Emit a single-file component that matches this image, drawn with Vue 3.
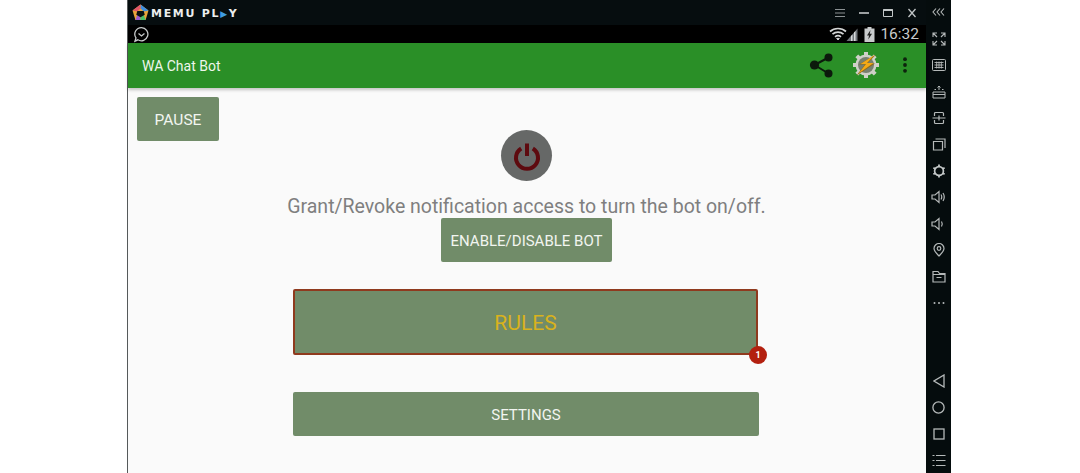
<script setup>
</script>

<template>
  <div class="page">
    <div class="emulator">
      <div class="main">
        <div class="titlebar">
          <svg class="logo" width="17" height="17" viewBox="0 0 16 16">
            <path d="M8 .5 15.500 6 12.800 15H3.200L.5 6Z" fill="#e8a33a" />
            <path d="M8 .5 15.500 6 11 7 8 4Z" fill="#3d8fe0" />
            <path d="M.5 6 8 .5V4L5 7Z" fill="#e0566a" />
            <path d="M3.200 15 5 10 8 12V15Z" fill="#9a5bd0" />
            <path d="M8 12 11 10 12.800 15H8Z" fill="#4cc06a" />
            <path d="M5 6.500H11L12 10 8 12.500 4 10Z" fill="#0a1012" />
          </svg>
          <span class="brand">MEMU PL<span class="brand-a">▶</span>Y</span>
          <div class="window-controls">
            <svg width="12" height="10" viewBox="0 0 12 10" stroke="#8b9193" fill="none">
              <path d="M1 1.500H11M1 5H11M1 8.500H11" />
            </svg>
            <svg width="12" height="10" viewBox="0 0 12 10" stroke="#c2c6c7" stroke-width="1.600" fill="none">
              <path d="M1 5H11" />
            </svg>
            <svg width="12" height="10" viewBox="0 0 12 10" stroke="#c2c6c7" fill="none">
              <path d="M1.500 1.500H10.500V8.500H1.500Z" />
              <path d="M1.500 2H10.500" stroke-width="2" />
            </svg>
            <svg width="12" height="10" viewBox="0 0 12 10" stroke="#c2c6c7" stroke-width="1.300" fill="none">
              <path d="M2.500 1 9.500 9M9.500 1 2.500 9" />
            </svg>
          </div>
        </div>

        <div class="statusbar">
          <svg class="notif" width="17" height="17" viewBox="0 0 16 16" fill="none" stroke="#c8cccc" stroke-width="1.200">
            <path d="M8 1.500A6.200 6.200 0 1 1 4.600 13L1.800 14.300 2.800 11.200A6.200 6.200 0 0 1 8 1.500Z" />
            <path d="M5.200 7 8 9.400 10.800 7" />
          </svg>
          <div class="status-right">
            <svg width="18" height="14" viewBox="0 0 18 14" fill="none" stroke="#d4d6d6" stroke-width="1.700">
              <path d="M1 4.500C5.500 .5 12.500 .5 17 4.500" />
              <path d="M3.500 7.200C6.500 4.500 11.500 4.500 14.500 7.200" />
              <path d="M6 9.800C7.800 8.400 10.200 8.400 12 9.800" />
              <path d="M7.700 11.400 9 13 10.300 11.400Z" fill="#d4d6d6" stroke-width="1" />
            </svg>
            <svg class="signal" width="12" height="13" viewBox="0 0 12 13">
              <path d="M11.500 .5V13H.5Z" fill="#70757a" />
              <path d="M8 4.500V13H9.500V3ZM5 8V13H6.500V6.500Z" fill="#d8dadb" />
            </svg>
            <svg class="battery" width="11" height="15" viewBox="0 0 10 15">
              <path d="M3 0H7V1.500H10V15H0V1.500H3Z" fill="#c9cbcc" />
              <path d="M6 3 2.500 8.500H4.500L3.800 12.500 7.500 6.800H5.300Z" fill="#222" />
            </svg>
            <span class="clock">16:32</span>
          </div>
        </div>

        <header class="appbar">
          <span class="app-title">WA Chat Bot</span>
          <div class="app-actions">
            <svg width="26" height="26" viewBox="0 0 26 26" fill="#0c1a0c">
              <circle cx="19.500" cy="5.500" r="4" />
              <circle cx="5.500" cy="13" r="4.600" />
              <circle cx="19.500" cy="21.500" r="4" />
              <path d="M5.500 13 19.500 5.500M5.500 13 19.500 21.500" stroke="#0c1a0c" stroke-width="2" />
            </svg>
            <svg class="tasker" width="28" height="28" viewBox="0 0 28 28">
              <circle cx="14" cy="14" r="10.500" fill="#cfd0c8" />
              <g stroke="#cfd0c8" stroke-width="4">
                <path d="M14 1V27M1 14H27M4.800 4.800 23.200 23.200M23.200 4.800 4.800 23.200" />
              </g>
              <circle cx="14" cy="14" r="8" fill="#77806f" />
              <path d="M24 3.500 7 13.500H13L4.500 24.500 23 12.500H15.500Z" fill="#8d6a1a" />
              <path d="M22.500 4 8.500 13H14L6.500 22.500 21.500 12H15Z" fill="#f3a916" />
            </svg>
            <svg width="4" height="16" viewBox="0 0 4 16" fill="#0d220d">
              <circle cx="2" cy="2.200" r="1.900" />
              <circle cx="2" cy="8" r="1.900" />
              <circle cx="2" cy="13.800" r="1.900" />
            </svg>
          </div>
        </header>

        <main class="content">
          <button class="btn pause">PAUSE</button>
          <div class="center">
            <div class="power">
              <svg width="30" height="30" viewBox="0 0 30 30" fill="none" stroke="#5e0a0f" stroke-width="4">
                <path d="M9.200 7.500A11 11 0 1 0 20.800 7.500" />
                <path d="M15 2.500V15" />
              </svg>
            </div>
            <p class="hint">Grant/Revoke notification access to turn the bot on/off.</p>
            <button class="btn enable">ENABLE/DISABLE BOT</button>
            <div class="rules-wrap">
              <button class="btn rules">RULES</button>
              <span class="badge">1</span>
            </div>
            <button class="btn settings">SETTINGS</button>
          </div>
        </main>
      </div>

      <aside class="sidebar">
        <div class="side-group side-top">
          <svg width="14" height="10" viewBox="0 0 14 10" fill="none" stroke="#b5b9b9" stroke-width="1.100">
            <path d="M4 1.500 1 5 4 8.500M8 1.500 5 5 8 8.500M12 1.500 9 5 12 8.500" />
          </svg>
          <svg width="14" height="14" viewBox="0 0 14 14" fill="none" stroke="#b5b9b9" stroke-width="1.100">
            <path d="M5 1H1V5M1 1 5 5M9 1H13V5M13 1 9 5M1 9V13H5M1 13 5 9M13 9V13H9M13 13 9 9" />
          </svg>
          <svg width="14" height="12" viewBox="0 0 14 12" fill="none" stroke="#b5b9b9">
            <rect x=".5" y=".5" width="13" height="11" rx="1" />
            <path d="M2.500 3.500H11.500M2.500 6H11.500M2.500 8.500H11.500M4.700 2.500V9.500M7 2.500V9.500M9.300 2.500V9.500" stroke-width=".9" />
          </svg>
          <svg width="14" height="14" viewBox="0 0 14 14" fill="none" stroke="#b5b9b9">
            <path d="M1 7H13V13H1ZM1 9.500H13M7 1V5M5.500 2.500 7 1 8.500 2.500M2.500 4.500H4M10 4.500H11.500" />
          </svg>
          <svg width="14" height="14" viewBox="0 0 14 14" fill="none" stroke="#b5b9b9" stroke-width="1.200">
            <path d="M2.500 5V2.500A1 1 0 0 1 3.500 1.500H10.500A1 1 0 0 1 11.500 2.500V5M2.500 9V11.500A1 1 0 0 0 3.500 12.500H10.500A1 1 0 0 0 11.500 11.500V9M.5 7H13.500M7 4.500V9.500" />
          </svg>
          <svg width="14" height="13" viewBox="0 0 14 13" fill="none" stroke="#b5b9b9" stroke-width="1.200">
            <path d="M1.500 3.500H10.500V12H1.500ZM3.500 1H13V10" />
          </svg>
          <svg width="14" height="14" viewBox="0 0 14 14" fill="none" stroke="#c4c8c8">
            <circle cx="7" cy="7" r="4.400" stroke-width="1.700" />
            <path d="M7 .5V2.500M7 11.500V13.500M1.400 3.800 3.100 4.800M10.900 9.200 12.600 10.200M1.400 10.200 3.100 9.200M10.900 4.800 12.600 3.800" stroke-width="1.800" />
          </svg>
          <svg width="15" height="14" viewBox="0 0 15 14" fill="none" stroke="#b5b9b9" stroke-width="1.200">
            <path d="M1 5H4L8 1.500V12.500L4 9H1ZM10 4.500Q11.500 7 10 9.500M12 3Q14.500 7 12 11" />
          </svg>
          <svg width="15" height="14" viewBox="0 0 15 14" fill="none" stroke="#b5b9b9" stroke-width="1.200">
            <path d="M1 5H4L8 1.500V12.500L4 9H1ZM10.500 4.500Q12 7 10.500 9.500" />
          </svg>
          <svg width="12" height="14" viewBox="0 0 12 14" fill="none" stroke="#b5b9b9" stroke-width="1.200">
            <path d="M6 13C3 10 1 8 1 5.500A5 5 0 0 1 11 5.500C11 8 9 10 6 13Z" />
            <circle cx="6" cy="5.500" r="1.800" />
          </svg>
          <svg width="14" height="13" viewBox="0 0 14 13" fill="none" stroke="#b5b9b9" stroke-width="1.200">
            <path d="M1 1.500H6L7.500 3.500H13V12H1ZM1 4.500H13M4.500 7.500H9.500" />
          </svg>
          <svg width="14" height="4" viewBox="0 0 14 4" fill="#b5b9b9">
            <circle cx="2.500" cy="2" r="1" />
            <circle cx="7" cy="2" r="1" />
            <circle cx="11.500" cy="2" r="1" />
          </svg>
        </div>
        <div class="side-group side-bottom">
          <svg width="12" height="14" viewBox="0 0 12 14" fill="none" stroke="#b5b9b9" stroke-width="1.300">
            <path d="M11 1V13L1 7Z" />
          </svg>
          <svg width="13" height="13" viewBox="0 0 13 13" fill="none" stroke="#b5b9b9" stroke-width="1.300">
            <circle cx="6.500" cy="6.500" r="5.600" />
          </svg>
          <svg width="12" height="12" viewBox="0 0 12 12" fill="none" stroke="#b5b9b9" stroke-width="1.300">
            <rect x="1" y="1" width="10" height="10" />
          </svg>
          <svg width="14" height="13" viewBox="0 0 14 13" fill="none" stroke="#b5b9b9" stroke-width="1.200">
            <path d="M4 1.500H13.500M4 6.500H13.500M4 11.500H13.500M.5 1.500H2.500M.5 6.500H2.500M.5 11.500H2.500" />
          </svg>
        </div>
      </aside>
    </div>
  </div>
</template>

<style scoped>
.page {
  width: 1080px;
  height: 473px;
  background: #fff;
  overflow: hidden;
  padding-left: 127px;
  box-sizing: border-box;
  font-family: Roboto, "Liberation Sans", sans-serif;
}

.emulator {
  display: flex;
  width: 824px;
  height: 473px;
  border-left: 1px solid #55595a;
  box-sizing: border-box;
}

.main {
  flex: 1;
  display: flex;
  flex-direction: column;
  min-width: 0;
}

.titlebar {
  height: 25px;
  background: #060d0f;
  display: flex;
  align-items: center;
  padding-left: 4px;
  flex-shrink: 0;
}

.logo {
  margin-right: 2px;
}

.brand {
  font-family: "DejaVu Sans", sans-serif;
  font-weight: 700;
  font-size: 11px;
  letter-spacing: 1.700px;
  color: #eceeee;
  white-space: nowrap;
  margin-top: 1px;
}

.brand-a {
  color: #3f9be0;
  font-size: 9px;
}

.window-controls {
  margin-left: auto;
  display: flex;
  gap: 12px;
  align-items: center;
  padding-right: 8px;
}

.statusbar {
  height: 18px;
  background: #000;
  display: flex;
  align-items: center;
  justify-content: space-between;
  padding: 0 7px 0 5px;
  flex-shrink: 0;
}

.status-right {
  display: flex;
  align-items: center;
}

.signal {
  margin-left: -1px;
}

.battery {
  margin: 0 5px 0 6px;
}

.clock {
  color: #c8cacb;
  font-size: 15.500px;
  line-height: 18px;
}

.appbar {
  height: 45px;
  background: #2a8f27;
  display: flex;
  align-items: center;
  justify-content: space-between;
  padding: 0 19px 0 14px;
  flex-shrink: 0;
  box-shadow: 0 2px 3px rgba(0, 0, 0, .22);
  position: relative;
}

.app-title {
  color: #eef6ec;
  font-size: 14px;
}

.app-actions {
  display: flex;
  align-items: center;
  margin-top: -2px;
}

.tasker {
  margin: 0 23px 0 17px;
}

.content {
  flex: 1;
  background: #fafafa;
  padding: 9px 0 0 9px;
  min-height: 0;
}

.center {
  display: flex;
  flex-direction: column;
  align-items: center;
  margin: -11px 0 0 -9px;
  padding-right: 1px;
}

.btn {
  display: block;
  border: 0;
  border-radius: 2px;
  background: #718c69;
  color: #f2f5f0;
  font-family: inherit;
  font-size: 15px;
  padding: 2px 0 0;
  height: 44px;
}

.pause {
  width: 82px;
  font-size: 15.500px;
}

.power {
  width: 51px;
  height: 51px;
  border-radius: 50%;
  background: #666867;
  display: flex;
  align-items: center;
  justify-content: center;
}

.hint {
  margin: 12px 0 0;
  padding-top: 2px;
  height: 23px;
  color: #7f7f7f;
  font-size: 19.500px;
  line-height: 24px;
  white-space: nowrap;
}

.enable {
  width: 171px;
  margin-top: 0;
}

.rules-wrap {
  position: relative;
  width: 466px;
  margin: 27px 1px 0 0;
}

.rules {
  width: 465px;
  height: 66px;
  box-sizing: border-box;
  border: 2px solid #8f3a1e;
  color: #d9b21c;
  font-size: 21px;
}

.badge {
  position: absolute;
  right: -8px;
  bottom: -9px;
  width: 18px;
  height: 18px;
  border-radius: 50%;
  background: #b3200f;
  color: #fff;
  font-size: 9px;
  font-weight: 700;
  line-height: 18px;
  text-align: center;
}

.settings {
  width: 466px;
  margin: 37px 1px 0 0;
}

.sidebar {
  width: 25px;
  flex-shrink: 0;
  background: #050c0d;
  display: flex;
  flex-direction: column;
  justify-content: space-between;
  align-items: center;
}

.side-group {
  display: grid;
  grid-auto-rows: 26.450px;
  justify-items: center;
  align-items: center;
}

.side-top {
  margin-top: -1px;
}

.side-bottom {
  margin-bottom: -1px;
}
</style>

<style>
html,
body {
  margin: 0;
  background: #fff;
}
</style>
